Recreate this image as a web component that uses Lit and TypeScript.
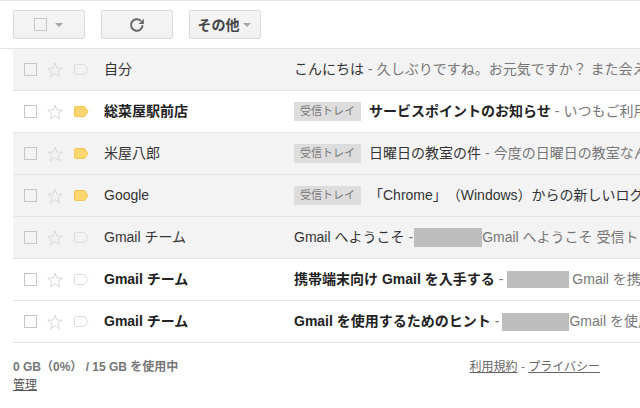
import { LitElement, html, css, svg } from "lit";
import { customElement } from "lit/decorators.js";
import { classMap } from "lit/directives/class-map.js";

interface Row {
  sender: string;
  subject: string;
  snippet: string;
  blur?: string;
  unread?: boolean;
  grey?: boolean;
  important?: boolean;
  inbox?: boolean;
}

const ROWS: Row[] = [
  { sender: "自分", subject: "こんにちは", snippet: "久しぶりですね。お元気ですか？ また会えるのを", grey: true },
  { sender: "総菜屋駅前店", subject: "サービスポイントのお知らせ", snippet: "いつもご利用いただき", unread: true, important: true, inbox: true },
  { sender: "米屋八郎", subject: "日曜日の教室の件", snippet: "今度の日曜日の教室なんですが", grey: true, important: true, inbox: true },
  { sender: "Google", subject: "「Chrome」（Windows）からの新しいログイン", snippet: "", grey: true, important: true, inbox: true },
  { sender: "Gmail チーム", subject: "Gmail へようこそ", blur: "b1", snippet: "Gmail へようこそ 受信トレイ", grey: true },
  { sender: "Gmail チーム", subject: "携帯端末向け Gmail を入手する", blur: "b2", snippet: "Gmail を携帯端末で", unread: true },
  { sender: "Gmail チーム", subject: "Gmail を使用するためのヒント", blur: "b3", snippet: "Gmail を使用する", unread: true },
];

@customElement("app-root")
export class AppRoot extends LitElement {
  static styles = css`
    :host {
      display: block;
      width: 640px;
      height: 408px;
      overflow: hidden;
      background: #fff;
      font-family: "Liberation Sans", "Noto Sans CJK JP", sans-serif;
      font-size: 14px;
      line-height: 18px;
      color: #222;
      text-spacing-trim: space-all;
    }
    .toolbar {
      display: flex;
      gap: 16px;
      height: 47px;
      box-sizing: border-box;
      padding: 9px 0 0 13px;
      border-top: 1px solid #e5e5e5;
    }
    .btn {
      width: 72px;
      height: 29px;
      box-sizing: border-box;
      border: 1px solid #dcdcdc;
      border-radius: 2px;
      background: linear-gradient(#f5f5f5, #f1f1f1);
      display: flex;
      align-items: center;
      justify-content: center;
      color: #444;
      font-weight: bold;
    }
    .btn.select { gap: 8px; padding-right: 2px; }
    .btn.more { gap: 3px; padding-right: 2px; }
    .btn-check {
      width: 11px;
      height: 11px;
      border: 1px solid #c6c6c6;
    }
    .caret {
      width: 0;
      height: 0;
      border-left: 4px solid transparent;
      border-right: 4px solid transparent;
      border-top: 4px solid #a5a5a5;
    }
    .list {
      border-top: 1px solid #e5e5e5;
      margin-top: 1px;
    }
    .row {
      height: 41px;
      margin-left: 13px;
      border-bottom: 1px solid #e5e5e5;
      display: flex;
      align-items: center;
      background: #fff;
      white-space: nowrap;
      overflow: hidden;
    }
    .row.grey { background: #f3f3f3; }
    .check {
      width: 11px;
      height: 11px;
      border: 1px solid #c6c6c6;
      margin-left: 11px;
      flex: none;
    }
    .star { margin-left: 10px; flex: none; display: block; }
    .label { margin-left: 11px; flex: none; display: block; }
    .sender {
      margin-left: 15px;
      width: 190px;
      flex: none;
      color: #333;
      padding-bottom: 2px;
    }
    .row.unread .sender, .row.unread .subject { font-weight: bold; color: #222; }
    .content {
      flex: 1;
      min-width: 0;
      overflow: hidden;
      display: flex;
      align-items: center;
    }
    .badge {
      flex: none;
      width: 67px;
      height: 19px;
      line-height: 18px;
      margin-right: 8px;
      background: #ddd;
      color: #777;
      font-size: 11px;
      text-align: center;
      margin-bottom: 1px;
    }
    .subject { color: #333; flex: none; padding-bottom: 2px; }
    .sep, .snippet { color: #777; flex: none; padding-bottom: 2px; }
    .sep { margin: 0 4px; }
    .blur { background: #bebebe; flex: none; }
    .b1 { width: 68px; height: 19px; margin-left: -3px; }
    .b2 { width: 62px; height: 17px; margin-right: 3px; }
    .b3 { width: 67px; height: 18px; margin-left: -1px; }
    .footer {
      display: flex;
      justify-content: space-between;
      padding: 15px 40px 0 13px;
      font-size: 12px;
      color: #777;
    }
    .storage { font-weight: bold; color: #777; }
    .manage { font-weight: normal; color: #555; display: block; text-decoration: underline; }
    .links a { color: #666; text-decoration: underline; }
  `;

  private star() {
    return html`<svg class="star" width="16" height="16" viewBox="0 0 16 16">
      <path d="M8 .9 9.8 6.1 15.3 6.2 11 9.6 12.6 14.9 8 11.7 3.4 14.9 5 9.6 .7 6.2 6.2 6.1Z" fill="none" stroke="#d8d8d8" stroke-width="1"/>
    </svg>`;
  }

  private label(on: boolean) {
    return html`<svg class="label" width="15" height="11" viewBox="0 0 15 11">
      ${svg`<path d="M1.5 .5H10.5L14 5.5 10.5 10.5H1.5Q.5 10.5 .5 9.5V1.5Q.5 .5 1.5 .5Z"
        fill=${on ? "#ffd76e" : "none"} stroke=${on ? "#f1c453" : "#dcdcdc"} stroke-width="1"/>`}
    </svg>`;
  }

  private renderRow(r: Row) {
    return html`<div class=${classMap({ row: true, grey: !!r.grey, unread: !!r.unread })}>
      <div class="check"></div>
      ${this.star()}
      ${this.label(!!r.important)}
      <div class="sender">${r.sender}</div>
      <div class="content">
        ${r.inbox ? html`<span class="badge">受信トレイ</span>` : ""}
        <span class="subject">${r.subject}</span>
        ${r.snippet || r.blur ? html`<span class="sep">-</span>` : ""}
        ${r.blur ? html`<span class="blur ${r.blur}"></span>` : ""}
        <span class="snippet">${r.snippet}</span>
      </div>
    </div>`;
  }

  render() {
    return html`
      <div class="toolbar">
        <div class="btn select"><div class="btn-check"></div><div class="caret"></div></div>
        <div class="btn">
          <svg width="16" height="16" viewBox="0 0 16 16">
            <path d="M13.6 8.2A5.8 5.8 0 1 1 11.9 3.9" fill="none" stroke="#666" stroke-width="2"/>
            <path d="M9.6 7H14.8V1.8Z" fill="#666"/>
          </svg>
        </div>
        <div class="btn more">その他<div class="caret"></div></div>
      </div>
      <div class="list">${ROWS.map((r) => this.renderRow(r))}</div>
      <div class="footer">
        <div class="storage">0 GB（0%） / 15 GB を使用中<a class="manage">管理</a></div>
        <div class="links"><a>利用規約</a> - <a>プライバシー</a></div>
      </div>
    `;
  }
}
